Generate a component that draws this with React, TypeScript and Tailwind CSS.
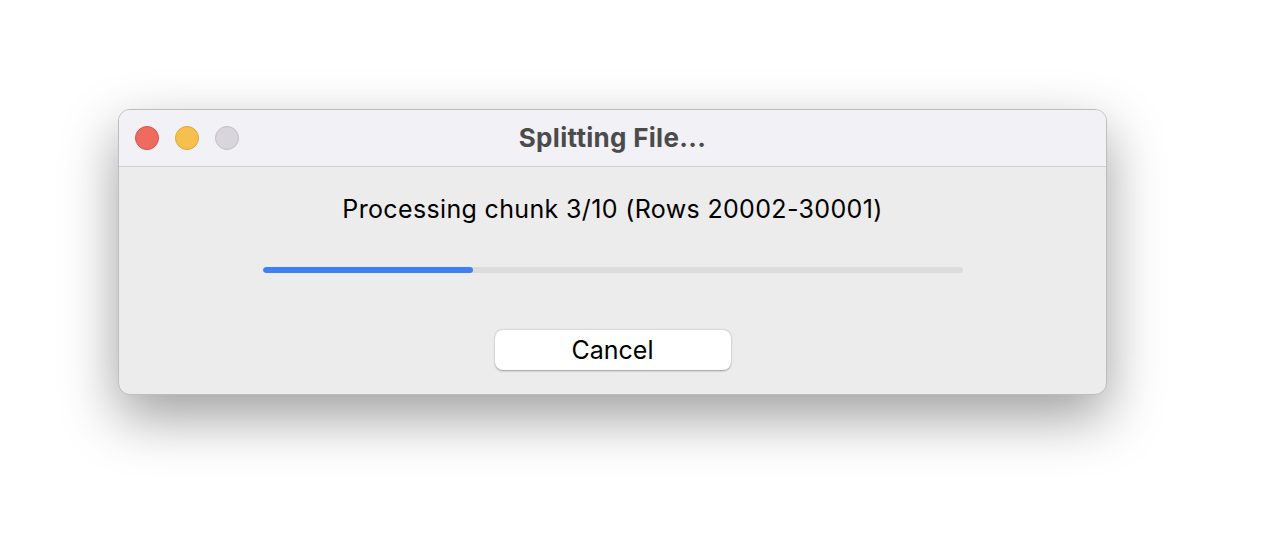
import React from "react";

export default function App() {
  const progress = 0.3;

  return (
    <div
      className="w-[1268px] h-[538px] bg-white pt-[109px] pl-[118px]"
      style={{ fontFamily: 'Inter, "Liberation Sans", Arial, sans-serif' }}
    >
      {/* Window */}
      <div className="w-[989px] h-[286px] rounded-[12px] border border-[#bdbdbd] bg-[#ececec] overflow-hidden shadow-[0_22px_55px_rgba(0,0,0,0.38)] flex flex-col">
        {/* Title bar */}
        <div className="relative h-[57px] shrink-0 bg-[#f2f1f5] border-b border-[#cfcfcf] flex items-center px-[16px]">
          <div className="flex items-center gap-[16px]">
            <span className="w-[24px] h-[24px] rounded-full bg-[#ef6b60] border border-[#d9534a]" />
            <span className="w-[24px] h-[24px] rounded-full bg-[#f6c04e] border border-[#dea53a]" />
            <span className="w-[24px] h-[24px] rounded-full bg-[#d8d6dc] border border-[#c2c0c6]" />
          </div>
          <div className="absolute inset-0 flex items-center justify-center pointer-events-none">
            <span className="text-[26px] leading-[32px] font-bold text-[#4b4b4d] tracking-[0.3px]">
              Splitting File...
            </span>
          </div>
        </div>

        {/* Body */}
        <div className="flex-1 flex flex-col items-center">
          <p className="mt-[27px] text-[25px] leading-[30px] text-black tracking-[0.35px]">
            Processing chunk 3/10 (Rows 20002-30001)
          </p>

          <div className="mt-[43px] w-[700px] h-[6px] rounded-full bg-[#dcdcdc] overflow-hidden">
            <div
              className="h-full rounded-full bg-[#3b80f6]"
              style={{ width: `${progress * 100}%` }}
            />
          </div>

          <button className="mt-[57px] w-[236px] h-[40px] rounded-[8px] bg-white text-[25px] leading-[30px] text-black shadow-[0_0.5px_2px_rgba(0,0,0,0.35)]">
            Cancel
          </button>
        </div>
      </div>
    </div>
  );
}
